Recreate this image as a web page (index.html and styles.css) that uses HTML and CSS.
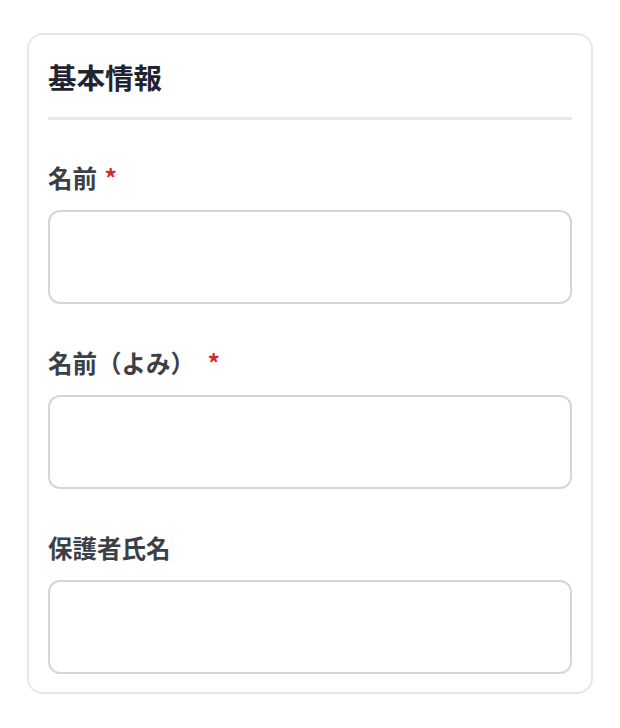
FILE: index.html
```html
<!DOCTYPE html>
<html lang="ja">
<head>
<meta charset="utf-8">
<title>基本情報</title>
<link rel="stylesheet" href="styles.css">
</head>
<body>
<section class="card">
  <h2 class="card-title">基本情報</h2>
  <div class="field">
    <label class="label" for="name">名前 <span class="req">*</span></label>
    <input class="input" id="name" type="text">
  </div>
  <div class="field">
    <label class="label" for="kana">名前（よみ） <span class="req req-wide">*</span></label>
    <input class="input" id="kana" type="text">
  </div>
  <div class="field">
    <label class="label" for="guardian">保護者氏名</label>
    <input class="input" id="guardian" type="text">
  </div>
</section>
</body>
</html>
```

FILE: styles.css
```css
* { box-sizing: border-box; }
html, body { background: #ffffff; }
body {
  margin: 0;
  padding: 33px 27px 0;
  font-family: "Noto Sans CJK JP", "Noto Sans", sans-serif;
}
.card {
  border: 2px solid #e7e7e9;
  border-radius: 16px;
  padding: 22px 19px 18px;
  background: #fff;
}
.card-title {
  margin: 0 0 40px;
  font-size: 28.5px;
  line-height: 40px;
  font-weight: 700;
  color: #1f2430;
  padding-bottom: 20px;
  border-bottom: 3px solid #e8e9eb;
}
.field { display: flex; flex-direction: column; }
.field + .field { margin-top: 41px; }
.label {
  font-size: 24.5px;
  line-height: 35px;
  font-weight: 700;
  color: #3b3f47;
  margin-bottom: 15px;
}
.req { color: #d42a2a; margin-left: 2px; }
.req-wide { margin-left: 7px; }
.input {
  display: block;
  width: 100%;
  height: 94px;
  border: 2px solid #d4d6d9;
  border-radius: 12px;
  background: #fff;
  font: inherit;
  padding: 0 16px;
  outline: none;
}
```
